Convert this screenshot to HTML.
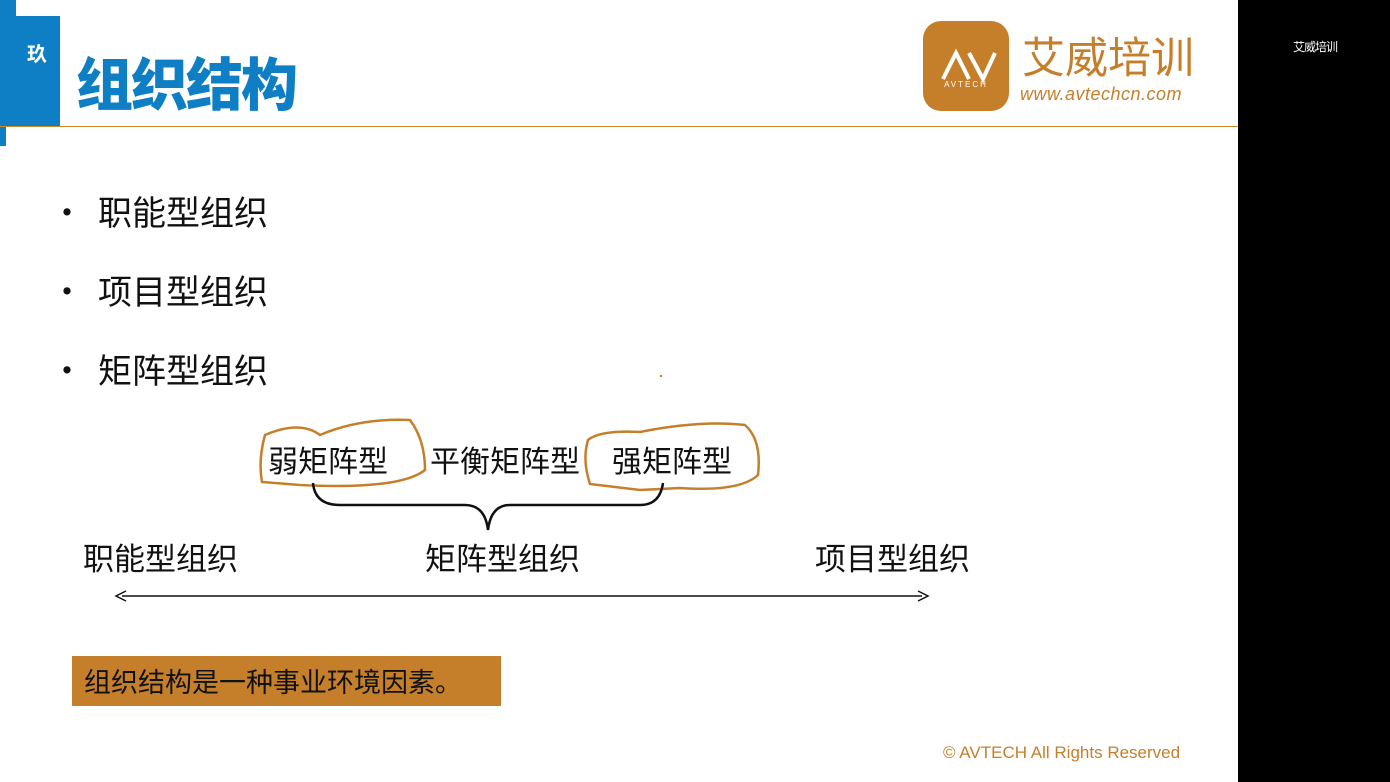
<!DOCTYPE html>
<html><head><meta charset="utf-8"><style>
*{margin:0;padding:0;box-sizing:border-box}
body{width:1390px;height:782px;background:#fff;position:relative;overflow:hidden;font-family:"Liberation Sans","Noto Sans CJK SC",sans-serif;color:#111}
.abs{position:absolute}
.cj{font-family:"Noto Sans CJK SC","WenQuanYi Zen Hei",sans-serif}
</style></head><body>
<div class="abs" style="left:1238px;top:0;width:152px;height:782px;background:#000"></div>
<div class="abs cj" style="left:1293px;top:38px;color:#fff;font-size:12px;letter-spacing:-1px">艾威培训</div>
<div class="abs" style="left:0;top:0;width:16px;height:16px;background:#0e7fc4"></div>
<div class="abs" style="left:0;top:16px;width:60px;height:110px;background:#0e7fc4"></div>
<div class="abs" style="left:0;top:126px;width:6px;height:20px;background:#0e7fc4"></div>
<div class="abs cj" style="left:27px;top:38px;color:#fff;font-size:20px;font-weight:bold">玖</div>
<div class="abs cj" style="left:76px;top:46px;color:#0e7fc4;font-size:57px;font-weight:900;line-height:70px;letter-spacing:-2px">组织结构</div>
<div class="abs" style="left:0;top:126px;width:1238px;height:1px;background:#c98a2e"></div>
<div class="abs" style="left:923px;top:21px;width:86px;height:90px;background:#c57f2a;border-radius:18px"></div>
<svg class="abs" style="left:923px;top:21px" width="86" height="90"><path d="M20 58 L33 32 L46 58 M46 32 L60 58 L72 32" stroke="#fff" stroke-width="4" fill="none"/><text x="43" y="66" fill="#fff" font-size="8" text-anchor="middle" font-family="Liberation Sans" letter-spacing="2">AVTECH</text></svg>
<div class="abs cj" style="left:1022px;top:28px;color:#c57f2a;font-size:43px;line-height:54px;letter-spacing:0px">艾威培训</div>
<div class="abs" style="left:1020px;top:84px;color:#c57f2a;font-size:18px;font-style:italic;letter-spacing:0.5px">www.avtechcn.com</div>
<div class="abs cj" style="left:50px;top:188px;font-size:34px;line-height:46px">•</div>
<div class="abs cj" style="left:98px;top:188px;font-size:34px;line-height:46px">职能型组织</div>
<div class="abs cj" style="left:50px;top:267px;font-size:34px;line-height:46px">•</div>
<div class="abs cj" style="left:98px;top:267px;font-size:34px;line-height:46px">项目型组织</div>
<div class="abs cj" style="left:50px;top:346px;font-size:34px;line-height:46px">•</div>
<div class="abs cj" style="left:98px;top:346px;font-size:34px;line-height:46px">矩阵型组织</div>
<div class="abs cj" style="left:268px;top:439px;font-size:30px;line-height:40px">弱矩阵型</div>
<div class="abs cj" style="left:430px;top:439px;font-size:30px;line-height:40px">平衡矩阵型</div>
<div class="abs cj" style="left:612px;top:439px;font-size:30px;line-height:40px">强矩阵型</div>
<svg class="abs" style="left:0;top:0" width="1238" height="782">
<path d="M265 435 Q300 420 320 435 Q360 418 410 420 Q425 440 425 470 Q400 490 300 485 L262 482 Q258 460 265 435Z" stroke="#c57f2a" stroke-width="2.5" fill="none"/>
<path d="M588 440 Q600 430 640 432 Q700 420 745 425 Q762 440 758 475 Q740 492 680 488 L640 490 L590 484 Q582 460 588 440Z" stroke="#c57f2a" stroke-width="2.5" fill="none"/>
<path d="M313 483 Q315 505 340 505 L465 505 Q485 505 488 530 Q491 505 510 505 L640 505 Q660 505 663 483" stroke="#111" stroke-width="2.5" fill="none"/>
<line x1="122" y1="596" x2="922" y2="596" stroke="#111" stroke-width="1.5"/>
<path d="M126 591 L116 596 L126 601 M918 591 L928 596 L918 601" stroke="#111" stroke-width="1.5" fill="none"/>
</svg>
<div class="abs cj" style="left:83px;top:536px;font-size:31px;line-height:42px">职能型组织</div>
<div class="abs cj" style="left:425px;top:536px;font-size:31px;line-height:42px">矩阵型组织</div>
<div class="abs cj" style="left:815px;top:536px;font-size:31px;line-height:42px">项目型组织</div>
<div class="abs cj" style="left:72px;top:656px;width:429px;height:50px;background:#c57f2a;font-size:27px;line-height:50px;padding-left:12px">组织结构是一种事业环境因素。</div>
<div class="abs" style="left:943px;top:743px;color:#c57f2a;font-size:17px">© AVTECH All Rights Reserved</div>
<div class="abs" style="left:660px;top:375px;width:2px;height:2px;background:#c57f2a"></div>
</body></html>
